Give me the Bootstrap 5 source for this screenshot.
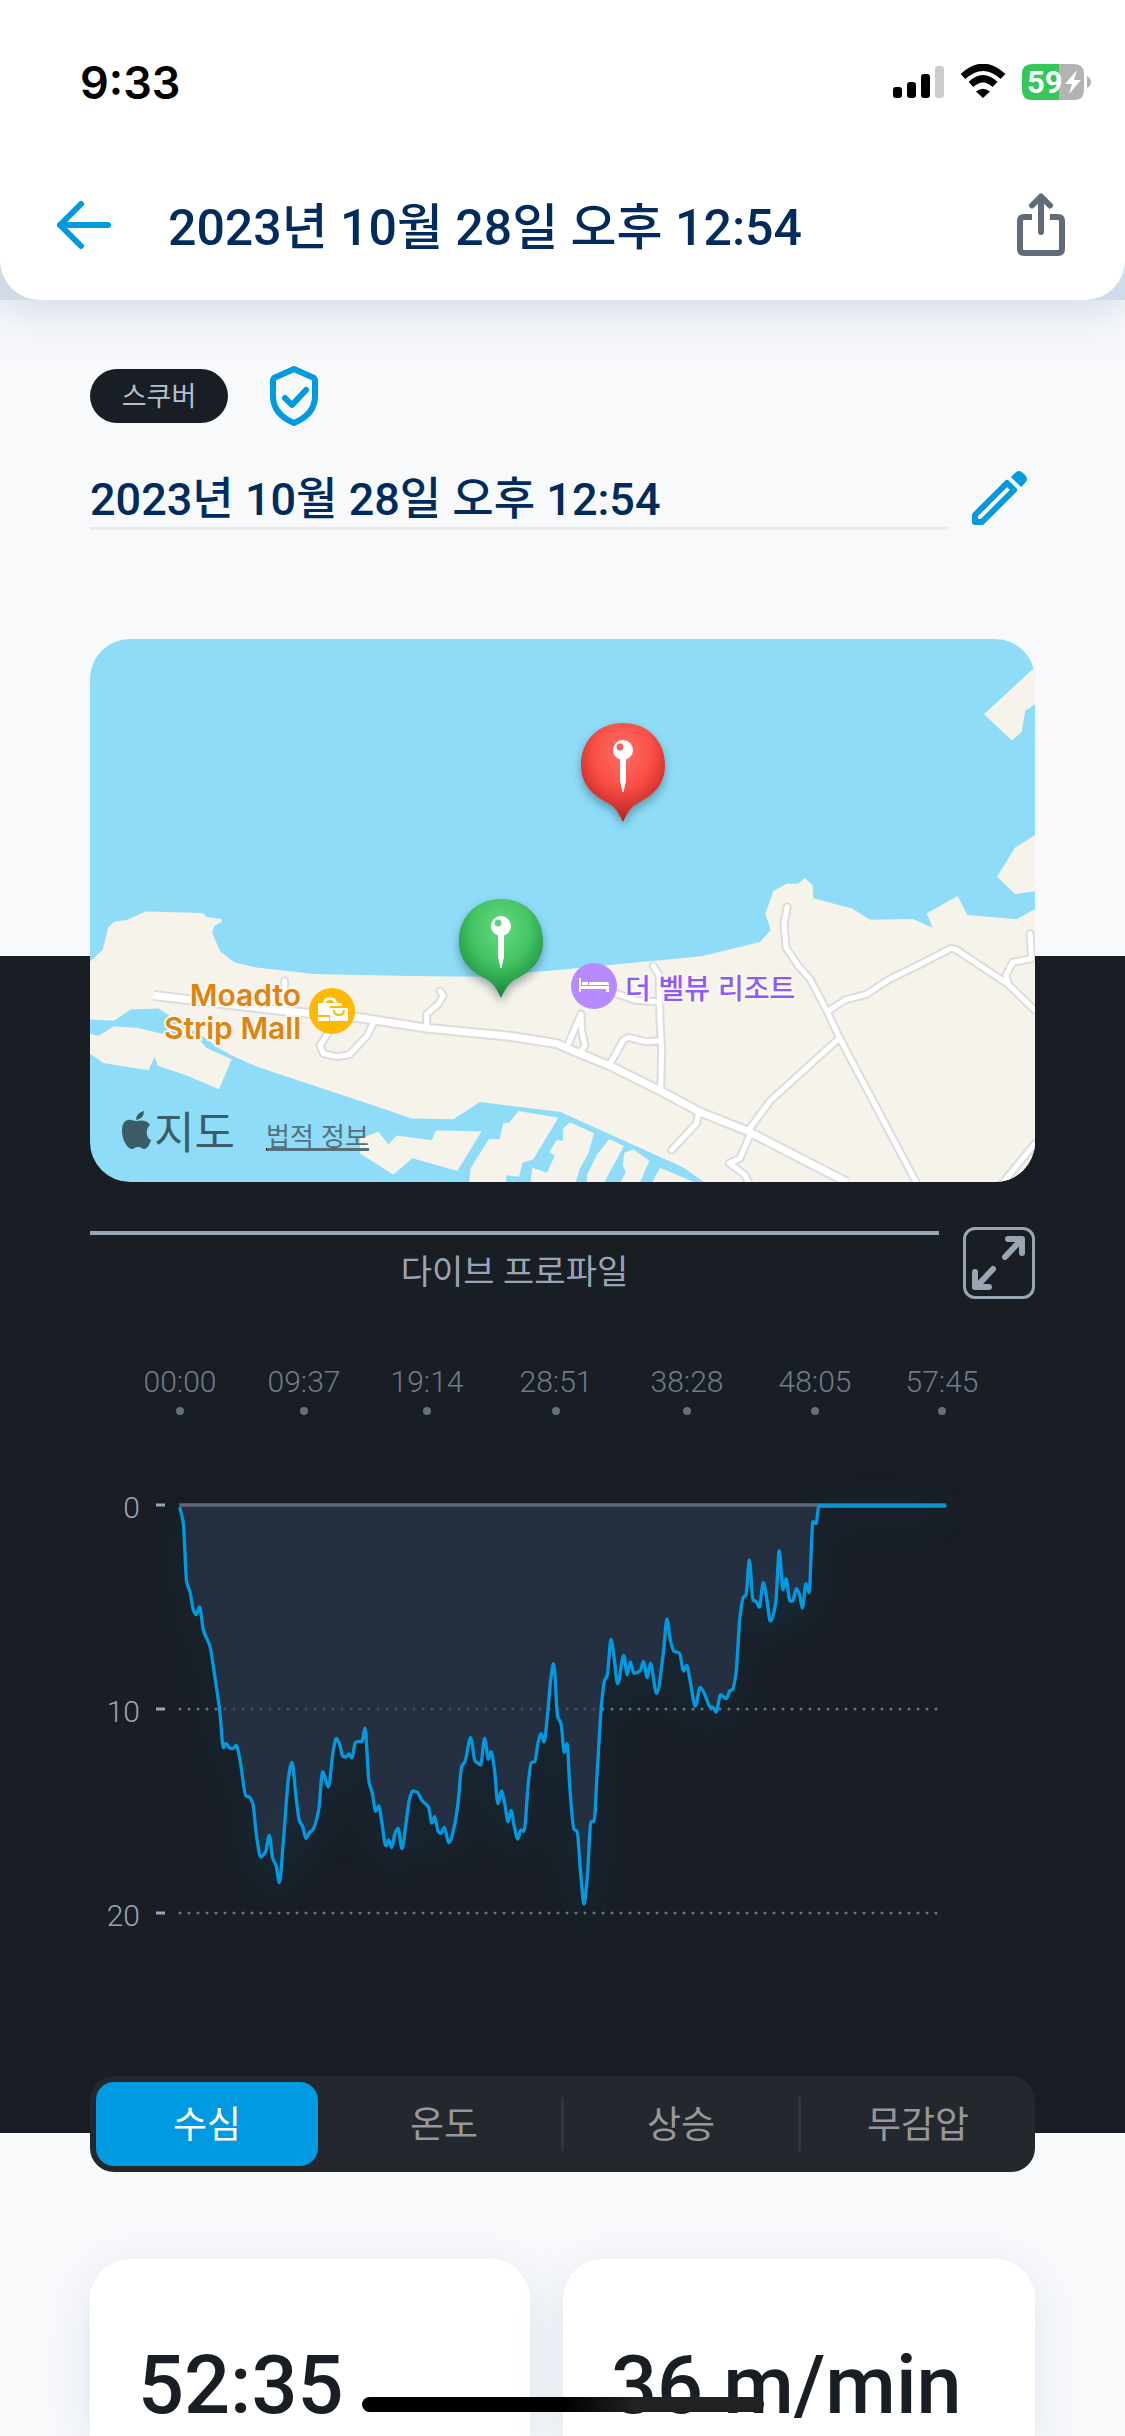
<!DOCTYPE html>
<html lang="ko">
<head>
<meta charset="utf-8">
<meta name="viewport" content="width=device-width, initial-scale=1">
<title>다이브 로그</title>
<link href="https://cdn.jsdelivr.net/npm/bootstrap@5.3.0/dist/css/bootstrap.min.css" rel="stylesheet">
<style>
:root{--ink:#191d24;--navy:#002b5c;--sky:#009ae0;--page:#f8f9fb;--steel:#9aa5b4}
body{background:var(--page);font-family:Roboto,"Noto Sans CJK KR",sans-serif;color:var(--ink);overflow-x:hidden}
svg{display:block}
.topwrap{background:#d0dbe9;box-shadow:0 6px 48px rgba(110,145,190,.34)}
.topbar{background:#fff;border-radius:0 0 40px 40px;padding-bottom:14px}
.statusbar{height:164px;padding:0 34px 0 80px}
.clock{font:600 45px/1 Inter,sans-serif;color:#000}
.navrow{height:122px;padding:0 60px 0 54px}
.plainbtn{background:none;border:0;padding:0}
.screen-title{font-size:50px;line-height:60px;font-weight:500;color:var(--navy);margin-left:54px;padding-top:6px}
.gutter{padding-left:90px;padding-right:90px}
.intro{padding-top:66px}
.shield{margin-left:42px}
.name-row{margin-top:30px;gap:21px}
.edit{margin-right:6px;padding-bottom:2px}
.kind{background:var(--ink);color:#b6c0cf;font-size:27px;font-weight:400;height:54px;width:138px;padding-top:3px}
.name-input{border:0;border-bottom:3px solid #e9ebeb;background:none;color:var(--navy);font-size:45px;line-height:60px;font-weight:500;padding:8px 0 0;height:74px;border-radius:0;min-width:0}
.mapband{background:linear-gradient(var(--page) 317px,var(--ink) 317px);margin-top:109px}
.mapcard{border-radius:40px;overflow:hidden}
.darkband{background:var(--ink);padding-top:45px}
.profile-row{gap:24px}
.profile-title{border-top:4px solid var(--steel);margin-top:4px;padding-top:12px;font-size:34px;line-height:50px;color:var(--steel)}
.expand{width:72px;height:72px;border:3px solid var(--steel);border-radius:12px}
.tabband{background:linear-gradient(var(--ink) 57px,var(--page) 57px)}
.segments{background:#23272e;border-radius:24px;padding:6px;height:96px;gap:15px}
.segments .btn{flex:1 1 0;border:0;border-radius:18px;font-size:37px;line-height:40px;color:#989898;padding:3px 0 0}
.segments .btn.active{background:var(--sky);color:#fff}
.segments .divided{position:relative}
.segments .divided::before{content:"";position:absolute;left:-9px;top:15px;bottom:15px;width:3px;background:#31363e}
.stats{gap:33px;margin-top:87px}
.stat{background:#fff;border-radius:40px 40px 0 0;box-shadow:0 12px 48px rgba(110,145,190,.18);padding:79px 48px 0;font-size:81px;line-height:96px;font-weight:500;flex:344 1 0}
.stat.wide{flex-grow:376}
.homebar{position:fixed;left:50%;bottom:24px;width:402px;height:15px;margin-left:-201px;border-radius:8px;background:linear-gradient(90deg,#000 50%,#222 68%)}
</style>
<script src="https://cdn.jsdelivr.net/npm/bootstrap@5.3.0/dist/js/bootstrap.bundle.min.js"></script>
</head>
<body class="min-vh-100 d-flex flex-column">
<header class="topwrap">
 <div class="topbar">
  <div class="statusbar d-flex align-items-center justify-content-between">
   <span class="clock">9:33</span>
   <svg width="199" height="36" viewBox="0 0 199 36" aria-hidden="true">
    <g fill="#000"><rect x="1" y="23" width="9" height="11" rx="3"/><rect x="15" y="18" width="9" height="16" rx="3"/><rect x="29" y="10" width="9" height="24" rx="3"/></g>
    <rect x="43" y="2" width="9" height="32" rx="3" fill="#ccc"/>
    <g fill="none" stroke="#000" stroke-width="7"><path d="M71 12.500Q91-6 111 12.500"/><path d="M79 20.500Q91 9 103 20.500"/></g>
    <path d="M84 27.500Q91 22 98 27.500L91 34Z"/>
    <path d="M140 0H167V36H140Q130 36 130 26V10Q130 0 140 0Z" fill="#34c759"/>
    <path d="M167 0H182Q192 0 192 10V26Q192 36 182 36H167Z" fill="#b3b3b3"/>
    <path d="M195 12Q199 14 199 18T195 24Z" fill="#b3b3b3"/>
    <text x="135" y="29" font-family="Roboto,sans-serif" font-weight="700" font-size="31" fill="#fff">59</text>
    <path d="M185 6L173 20H180L177 30L189 16H182Z" fill="#fff"/>
   </svg>
  </div>
  <div class="navrow d-flex align-items-center">
   <button class="plainbtn" aria-label="뒤로"><svg width="60" height="60" viewBox="0 0 60 60" fill="none" stroke="#009ae0" stroke-width="6" stroke-linecap="round" stroke-linejoin="round"><path d="M54 30H6M27 9L6 30L27 51"/></svg></button>
   <h1 class="screen-title mb-0 flex-grow-1">2023년 10월 28일 오후 12:54</h1>
   <button class="plainbtn" aria-label="공유"><svg width="48" height="64" viewBox="0 0 48 64" fill="none" stroke="#616b7a" stroke-width="6" stroke-linecap="round"><path stroke-linecap="butt" d="M15 24H7Q3 24 3 28V56Q3 60 7 60H41Q45 60 45 56V28Q45 24 41 24H33"/><path stroke-linejoin="round" d="M24 39V4M15 12.500L24 3.500L33 12.500"/></svg></button>
  </div>
 </div>
</header>

<main class="d-flex flex-column flex-grow-1">
 <section class="gutter intro">
  <div class="d-flex align-items-center">
   <span class="kind rounded-pill d-flex align-items-center justify-content-center">스쿠버</span>
   <svg class="shield" width="48" height="60" viewBox="0 0 48 60" fill="none" stroke="#009ae0" stroke-width="6" stroke-linecap="round" stroke-linejoin="round"><path d="M24 3L44 12Q45 13 45 14V30C45 43 36 52 24 57C12 52 3 43 3 30V14Q3 13 4 12Z"/><path d="M15 32L22 39L36 24"/></svg>
  </div>
  <div class="name-row d-flex align-items-end">
   <input class="name-input flex-grow-1" type="text" aria-label="다이브 이름" value="2023년 10월 28일 오후 12:54">
   <button class="plainbtn edit" aria-label="편집"><svg width="60" height="60" viewBox="0 0 60 60" fill="none" stroke="#009ae0" stroke-width="6" stroke-linejoin="round"><path d="M6 47L38 15L45 22L13 54H6Z"/><path fill="#009ae0" stroke="none" d="M42 9L46 5Q50 1 54 5L56 7Q60 11 56 15L52 19Z"/></svg></button>
  </div>
 </section>

 <section class="mapband gutter">
  <div class="mapcard">
  <svg width="100%" viewBox="0 0 945 543" role="img" aria-label="지도">
   <defs>
    <radialGradient id="gr" cx=".5" cy=".3" r=".7"><stop offset="0" stop-color="#ff6e66"/><stop offset=".5" stop-color="#fa4f47"/><stop offset="1" stop-color="#b5201c"/></radialGradient>
    <radialGradient id="gg" cx=".5" cy=".3" r=".7"><stop offset="0" stop-color="#68d880"/><stop offset=".5" stop-color="#43c463"/><stop offset="1" stop-color="#17833a"/></radialGradient>
    <filter id="soft" x="-50%" y="-50%" width="200%" height="200%"><feGaussianBlur stdDeviation="5"/></filter>
    <path id="pinshape" d="M0 0C25 0 42 18 42 42C42 61 31 72 15 80C7 84 4 91 0 99C-4 91-7 84-15 80C-31 72-42 61-42 42C-42 18-25 0 0 0Z"/>
    <g id="needle"><circle cx="0" cy="27" r="10" fill="#fff"/><path d="M-2.500 35H2.500V58L0 69L-2.500 58Z" fill="#fff" stroke="#fff" stroke-width="1"/></g>
    <g id="roads" fill="none" stroke-linecap="round" stroke-linejoin="round">
     <path vector-effect="non-scaling-stroke" d="M584 975L580 1058M715 1115L690 1150L700 1172L740 1180L778 1175L830 1125L853 1085M1010 1100V1065L1045 1038L1060 1015L1050 1003M1435 1145L1473 1065L1475 1110L1485 1150L1470 1170M1560 1200L1600 1135L1615 1128L1670 1140L1710 1137M1690 935L1707 960L1710 1080L1715 1165L1712 1272M1580 1010L1635 1028L1705 1032M2092 775L2082 820L2088 885L2125 935L2160 970L2210 1055L2248 1128L2478 1519M2215 1057L2265 1027L2328 1012L2400 970L2480 935L2582 888L2597 890L2755 985L2835 1055M2820 848L2825 915L2768 925L2748 960L2755 985M2248 1130L2040 1300L1975 1380M1983 1385L1950 1455L1918 1468L1965 1500L1975 1519M1825 1335L1820 1360L1745 1432M2835 1415L2740 1519"/>
    </g>
    <path id="mainroad" fill="none" vector-effect="non-scaling-stroke" d="M190 1015L600 1058L810 1075L1010 1103L1260 1125L1400 1145L1470 1172L1560 1205L1710 1272L1830 1330L1975 1382L2110 1445L2270 1519"/>
   </defs>
   <rect width="945" height="543" fill="#8edcf7"/>
   <g transform="translate(0 -19) scale(.33333 .37)">
    <g fill="#f6f3eb">
     <path d="M0 923L38 892L55 830L74 815L110 811L168 788L338 792L350 803L395 808L397 815L372 827L367 847L391 896L433 925L490 938L672 957L960 962L1170 964L1410 945L1835 909L2010 870L2042 838L2026 793L2051 732L2090 713H2124L2145 697L2168 717L2170 752L2286 780L2341 810L2468 808L2528 832L2510 793L2603 746L2632 797L2780 809L2835 781V1530H1860L1780 1480L1412 1330L1170 1303L1090 1349L965 1347L840 1309L530 1216L495 1205L425 1177L385 1157L342 1128L235 1067L205 1050L122 1053L72 1083L0 1080Z"/>
     <path d="M0 1118L25 1124L72 1098L145 1103L210 1117L330 1137L350 1157L425 1187L387 1268L290 1231L203 1205L194 1181L175 1217L40 1197L0 1172Z"/>
     <path d="M810 1402L865 1383L895 1417L920 1393L1025 1406L1038 1380L1175 1382L1102 1489L967 1455L910 1499L810 1442Z"/>
     <path d="M2682 255L2835 127V228L2806 245L2795 303L2766 326ZM2835 581L2775 615L2721 694L2776 741L2835 733Z"/>
    </g>
    <use href="#roads" stroke="#dcdcdc" stroke-width="9"/><use href="#mainroad" stroke="#dcdcdc" stroke-width="11"/>
    <use href="#roads" stroke="#fff" stroke-width="5"/><use href="#mainroad" stroke="#fff" stroke-width="7"/>
   </g>
   <g transform="translate(360 421) scale(.33333)" fill="#f6f3eb">
    <path d="M205 153L325 173L250 298L218 308L207 350L169 346L166 390H55L62 325L117 236L149 238L160 188H178ZM360 187L432 220L414 283L390 325L370 390H238L247 323L291 338L314 288L298 276L320 240L338 243L340 205ZM478 237L522 258L450 390H410L411 345L440 285ZM550 268L598 302L560 390H500L527 337L518 315L523 278ZM630 323L730 365L780 390H600L610 360Z"/>
   </g>
   <g transform="translate(533 84)"><use href="#pinshape" y="5" fill="#25485a" opacity=".45" filter="url(#soft)"/><use href="#pinshape" fill="url(#gr)"/><use href="#needle"/><circle cx="-3" cy="24" r="3.500" fill="#fa6058"/></g>
   <g transform="translate(411 260)"><use href="#pinshape" y="5" fill="#25485a" opacity=".45" filter="url(#soft)"/><use href="#pinshape" fill="url(#gg)"/><use href="#needle"/><circle cx="-3" cy="24" r="3.500" fill="#62d27b"/></g>
   <circle cx="242" cy="372" r="23" fill="#ffb900"/>
   <g fill="#fff"><path d="M228 364h5q1-6 7-6t7 6h5v3h-12v9h-12zM236 364h8q0-3-4-3t-4 3z" fill-rule="evenodd"/><rect x="228" y="378" width="11" height="4"/><rect x="240" y="369" width="18" height="13" rx="1"/></g>
   <path d="M244 371q0 5 5 5t5-5" fill="none" stroke="#ffb900" stroke-width="2"/>
   <circle cx="504" cy="347" r="23" fill="#b78aff"/>
   <path d="M489 339h2v8h28v6h-3v-3h-25v3h-2zM492 343h6v3h-6zM499 343h18q2 0 2 3h-20z" fill="#fff"/>
   <g font-family="Inter,sans-serif" font-weight="600" font-size="30" fill="#e0840f" text-anchor="end" stroke="#fbf8f2" stroke-width="4" paint-order="stroke" stroke-linejoin="round"><text x="211" y="367">Moadto</text><text x="211" y="400">Strip Mall</text></g>
   <text x="535" y="360" font-family="Noto Sans CJK KR,sans-serif" font-weight="500" font-size="28" fill="#8f5af7" stroke="#fbf8f2" stroke-width="4" paint-order="stroke" stroke-linejoin="round">더 벨뷰 리조트</text>
   <g fill="#3b5d68"><path d="M47 482C43 482 41 480 38 481C33 482 32 487 32 492C32 500 37 510 42 510C44 510 45 508 48 508S52 510 54 510C58 510 60 504 61 501C56 499 55 490 60 486C57 481 51 481 47 482ZM46 481Q46 474 54 472Q54 480 46 481Z"/><text x="64" y="510" font-family="Noto Sans CJK KR,sans-serif" font-size="44">지도</text></g>
   <a href="#legal"><text x="176" y="507" font-family="Noto Sans CJK KR,sans-serif" font-size="26" fill="#54717b">법적 정보</text><rect x="177" y="509" width="102" height="3" fill="#54717b"/></a>
  </svg>
  </div>
 </section>

 <section class="darkband gutter">
  <div class="profile-row d-flex align-items-start">
   <h2 class="profile-title flex-grow-1 text-center mb-0 fw-normal">다이브 프로파일</h2>
   <button class="plainbtn expand" aria-label="전체 화면"><svg width="66" height="66" viewBox="0 0 66 66" fill="none" stroke="#9aa5b4" stroke-width="6" stroke-linecap="round" stroke-linejoin="round"><path d="M39 27L54 11M42 9H56V23M27 39L12 55M9 42V57H23"/></svg></button>
  </div>
  <svg width="100%" viewBox="0 0 945 777" role="img" aria-label="수심 그래프" font-family="Roboto,sans-serif" font-weight="300">
   <defs><filter id="glow" x="-20%" y="-20%" width="140%" height="150%"><feGaussianBlur stdDeviation="60"/></filter></defs>
   <g fill="#717b8a" font-size="30" text-anchor="middle"><text x="90" y="93">00:00</text><text x="214" y="93">09:37</text><text x="337" y="93">19:14</text><text x="466" y="93">28:51</text><text x="597" y="93">38:28</text><text x="725" y="93">48:05</text><text x="852" y="93">57:45</text></g>
   <g fill="#666f7e"><circle cx="90" cy="112" r="4"/><circle cx="214" cy="112" r="4"/><circle cx="337" cy="112" r="4"/><circle cx="466" cy="112" r="4"/><circle cx="597" cy="112" r="4"/><circle cx="725" cy="112" r="4"/><circle cx="852" cy="112" r="4"/></g>
   <g fill="#9aa5b4" font-size="30" text-anchor="end"><text x="50" y="219">0</text><text x="50" y="423">10</text><text x="50" y="627">20</text></g>
   <path d="M66 206h9M66 410h9M66 614h9" stroke="#9aa5b4" stroke-width="3"/>
   <path d="M90 410H848M90 614H848" stroke="#6c7380" stroke-width="3" stroke-linecap="round" stroke-dasharray="0 9"/>
   <g transform="translate(70 181) scale(.33333)">
    <path id="glowline" fill="none" stroke="#009ae0" stroke-width="30" opacity=".15" filter="url(#glow)" transform="translate(0 20)"/>
    <path id="area" fill="#2c394d" opacity=".62"/>
    <path d="M58 75H2358" stroke="#616a79" stroke-width="10"/>
    <path id="depth" fill="none" stroke="#009ae0" stroke-width="10" stroke-linecap="round" stroke-linejoin="round"/>
   </g>
  </svg>
 </section>

 <section class="tabband gutter">
  <div class="segments d-flex" role="group" aria-label="그래프 종류">
   <button class="btn active">수심</button><button class="btn">온도</button><button class="btn divided">상승</button><button class="btn divided">무감압</button>
  </div>
 </section>

 <section class="gutter stats d-flex flex-grow-1">
  <div class="stat">52:35</div>
  <div class="stat wide text-nowrap">36 m/min</div>
 </section>
</main>
<div class="homebar"></div>
<script>
// Depth samples: x, y pairs
const d=[60,85,70,130,80,305,90,335,100,390,108,404,119,381,130,450,150,500,163,580,180,700,190,803,198,790,208,803,218,806,229,796,240,840,258,948,268,951,278,970,290,1070,302,1131,317,1115,328,1066,338,1135,348,1155,358,1208,370,1085,386,890,396,847,408,950,418,1022,428,1040,438,1075,448,1058,458,1050,476,990,488,875,505,921,520,810,529,775,538,790,548,828,558,831,567,822,576,833,586,788,596,784,606,785,615,744,627,905,637,940,647,994,656,978,666,1030,677,1097,686,1080,695,1103,705,1060,714,1045,726,1106,738,1030,748,960,758,933,772,937,786,962,805,980,816,1029,824,1010,835,1055,843,1060,853,1042,866,1088,885,1030,895,960,905,860,915,845,932,773,945,843,955,850,962,855,974,775,985,838,993,815,1003,865,1014,971,1024,933,1035,975,1044,1025,1053,991,1063,1040,1073,1077,1083,1050,1092,1054,1105,910,1114,848,1124,845,1135,785,1143,761,1152,786,1163,700,1172,600,1181,551,1193,710,1203,730,1213,817,1221,791,1230,930,1242,1048,1251,1054,1262,1180,1272,1272,1282,1190,1293,1025,1302,1024,1312,870,1324,680,1333,605,1342,585,1353,478,1362,530,1373,611,1391,526,1402,584,1411,546,1422,580,1441,572,1450,545,1462,593,1471,550,1490,640,1510,520,1521,417,1531,480,1542,514,1558,519,1571,573,1580,556,1590,600,1606,678,1621,622,1635,645,1650,680,1659,682,1668,696,1682,644,1699,656,1710,632,1718,628,1728,580,1740,410,1750,352,1758,345,1768,240,1779,360,1789,365,1798,381,1810,308,1820,355,1831,423,1847,370,1858,212,1869,330,1878,296,1890,363,1898,363,1909,326,1919,345,1927,384,1938,311,1947,338,1959,125,1968,131,1977,78,2355,78];
const p=[];for(let i=0;i<d.length;i+=2)p.push([d[i],d[i+1]]);
// Monotone cubic interpolation through the samples
const n=p.length,s=[],m=[];
for(let i=0;i<n-1;i++)s[i]=(p[i+1][1]-p[i][1])/(p[i+1][0]-p[i][0]);
m[0]=s[0];m[n-1]=s[n-2];
for(let i=1;i<n-1;i++)m[i]=s[i-1]*s[i]<=0?0:2*s[i-1]*s[i]/(s[i-1]+s[i]);
let path='M'+p[0];
for(let i=0;i<n-1;i++){const h=(p[i+1][0]-p[i][0])/3;path+='C'+[p[i][0]+h,p[i][1]+m[i]*h,p[i+1][0]-h,p[i+1][1]-m[i+1]*h,p[i+1][0],p[i+1][1]];}
document.getElementById('depth').setAttribute('d',path);
document.getElementById('glowline').setAttribute('d',path);
document.getElementById('area').setAttribute('d',path+'V78H60Z');
</script>
</body>
</html>
